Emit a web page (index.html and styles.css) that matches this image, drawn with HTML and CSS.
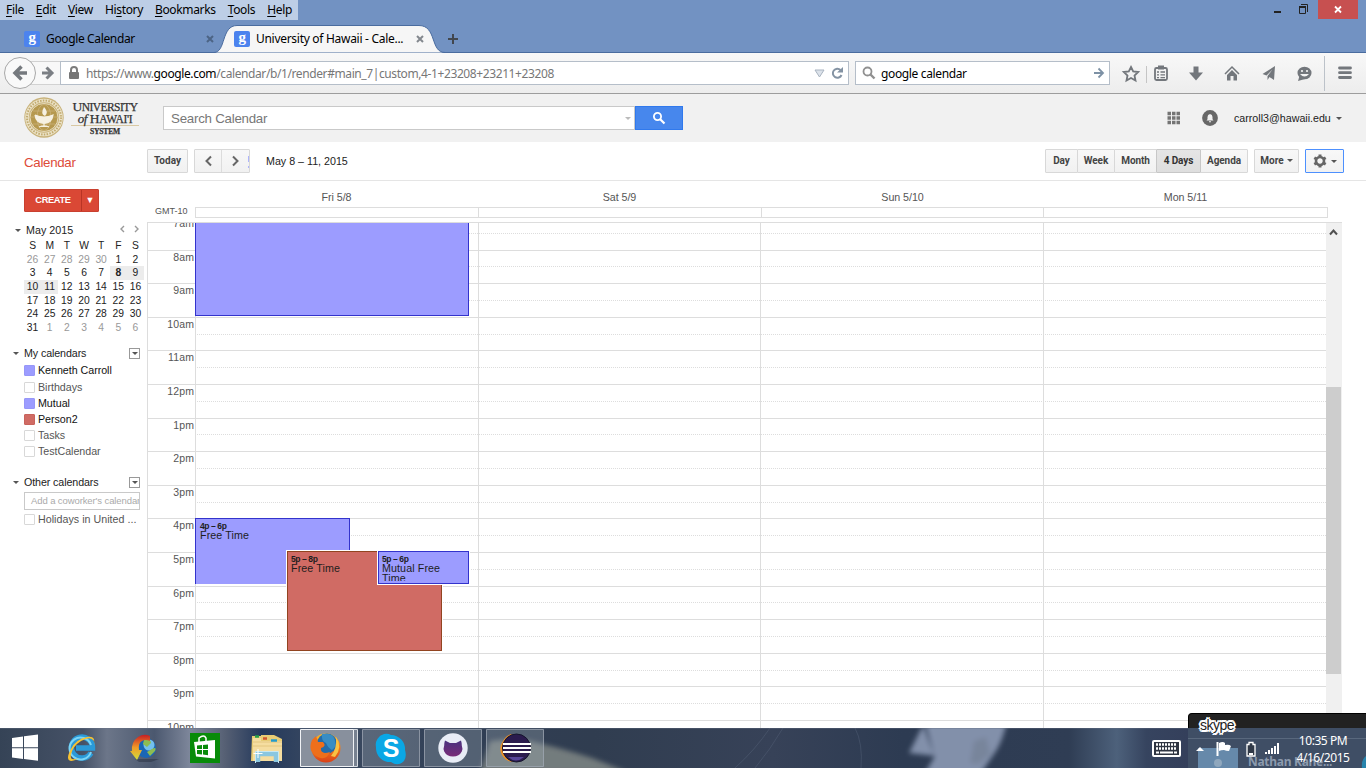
FILE: index.html
```html
<!DOCTYPE html>
<html lang="en">
<head>
<meta charset="utf-8">
<title>University of Hawaii - Calendar</title>
<link rel="stylesheet" href="styles.css">
</head>
<body>
<div class="screen">
  <header class="chrome">
    <div class="menurow">
      <nav class="menus"><span><u>F</u>ile</span><span><u>E</u>dit</span><span><u>V</u>iew</span><span>Hi<u>s</u>tory</span><span><u>B</u>ookmarks</span><span><u>T</u>ools</span><span><u>H</u>elp</span></nav>
      <div class="winbtns">
        <svg width="88" height="19" viewBox="0 0 88 19"><path d="M1 12h7" stroke="#222" stroke-width="2"/><path d="M26.500 7.500h6v6h-6zM28 4.500h6.500v7.500" fill="none" stroke="#222"/><path d="M26 7h7" stroke="#222" stroke-width="2"/><rect x="45" width="40" height="19" fill="#c75050"/><path d="M62 6.500l6 6m0-6l-6 6" stroke="#fff" stroke-width="1.800"/></svg>
      </div>
    </div>
    <div class="tabs">
      <svg class="tabshape" width="234" height="29" viewBox="0 0 234 29"><path d="M0 28.500C12 28.500 7 1.500 23 1.500H205C223 1.500 216 28.500 231 28.500" fill="#f6f6f6" stroke="#4a6c9f"/></svg>
      <div class="tab first"><b class="fav">g</b><span>Google Calendar</span></div>
      <svg class="x x1" width="8" height="8"><path d="M1 1l6 6m0-6l-6 6" stroke="#4c6485" stroke-width="2"/></svg>
      <div class="tab second"><b class="fav">g</b><span>University of Hawaii - Cale...</span></div>
      <svg class="x x2" width="8" height="8"><path d="M1 1l6 6m0-6l-6 6" stroke="#83888e" stroke-width="2"/></svg>
      <svg class="plus" width="12" height="12"><path d="M1 6h10M6 1v10" stroke="#42474e" stroke-width="2"/></svg>
    </div>
    <div class="toolbar">
      <svg class="navbtns" width="60" height="40" viewBox="0 0 60 40"><path d="M30 9.500h31v23H30" fill="#f8f8f8" stroke="#d2d2d2"/><circle cx="20" cy="21" r="15.500" fill="#f9f9f9" stroke="#a8a8a8"/><path d="M27 21H16m5.500-6.500L15 21l6.500 6.500" fill="none" stroke="#75797e" stroke-width="3.500"/><path d="M42 21h9m-4.500-5.500L52 21l-5.500 5.500" fill="none" stroke="#7b7f84" stroke-width="3"/></svg>
      <div class="url">
        <svg width="12" height="14" viewBox="0 0 12 14"><path d="M3 7V4a3 3 0 0 1 6 0v3" fill="none" stroke="#7c7c7c" stroke-width="2"/><rect x="1" y="6" width="10" height="7" rx="1" fill="#777"/></svg>
        <span class="address">https://www.<b>google.com</b>/calendar/b/1/render#main_7|custom,4-1+23208+23211+23208</span>
        <svg class="end" width="32" height="16" viewBox="0 0 32 16"><path d="M1 5h9l-4.500 7z" fill="#dce2ea" stroke="#a8b3c0"/><path d="M26.500 5a4.500 4.500 0 1 0 1 5" fill="none" stroke="#8493a3" stroke-width="2"/><path d="M23 7.500h6V2z" fill="#8493a3"/></svg>
      </div>
      <div class="searchbox">
        <svg width="14" height="14" viewBox="0 0 14 14"><circle cx="5.500" cy="5.500" r="4" fill="none" stroke="#909090" stroke-width="1.800"/><path d="M8.500 8.500l4 4" stroke="#909090" stroke-width="2.400"/></svg>
        <span>google calendar</span>
        <svg class="end" width="12" height="12" viewBox="0 0 12 12"><path d="M1 6h8M5.500 1.500L10 6l-4.500 4.500" fill="none" stroke="#7d91a5" stroke-width="1.800"/></svg>
      </div>
      <svg class="tools" width="246" height="40" viewBox="0 0 246 40">
        <path d="M11 14l2.200 4.500 5 .5-3.700 3.500 1 5-4.500-2.500-4.500 2.500 1-5L3.800 19l5-.5z" fill="none" stroke="#73777c" stroke-width="1.800"/>
        <path d="M26.500 13v17" stroke="#c5c5c5"/>
        <rect x="35" y="15" width="12" height="12" rx="1.500" fill="none" stroke="#73777c" stroke-width="1.800"/><path d="M38 14.500h6" stroke="#73777c" stroke-width="4"/><path d="M37 19h2m1.500 0H45m-8 2.800h2m1.500 0H45m-8 2.800h2m1.500 0H45" stroke="#73777c" stroke-width="1.300"/>
        <path d="M73.500 13.500h5v6H83l-7 8-7-8h4.500z" fill="#73777c"/>
        <path d="M105 21l7-7 7 7" fill="none" stroke="#73777c" stroke-width="1.500"/><path d="M107 22l5-5 5 5v5.500h-3.500v-4.500h-3v4.500H107z" fill="#73777c"/>
        <path d="M155 13l-1 14-4.500-3-2 3v-4l5-6.500-6 6-4-1.500z" fill="#73777c"/>
        <ellipse cx="184.500" cy="20" rx="7" ry="6.300" fill="#73777c"/><path d="M179.500 23l-1.500 5 7-2z" fill="#73777c"/><circle cx="182" cy="18" r="1.100" fill="#f3f3f3"/><circle cx="187" cy="18" r="1.100" fill="#f3f3f3"/><path d="M180 21h9q-4.500 5-9 0" fill="#f3f3f3"/>
        <path d="M204.500 3v35" stroke="#bcc2c9"/><path d="M219.500 15h11m-11 4.700h11m-11 4.800h11" stroke="#73777c" stroke-width="2.800" stroke-linecap="round"/>
      </svg>
    </div>
  </header>

  <section class="ghead">
    <svg class="seal" width="40" height="42" viewBox="0 0 40 42"><ellipse cx="20" cy="20.500" rx="19.700" ry="20.300" fill="#c8b27a"/><circle cx="20" cy="20.500" r="17" fill="none" stroke="#ece3c8" stroke-width="3.600"/><circle cx="20" cy="20.500" r="17" fill="none" stroke="#c2ab70" stroke-width="2" stroke-dasharray="1.500 1.300"/><circle cx="20" cy="20.500" r="14" fill="#b6994f" stroke="#efe7cf" stroke-width=".8"/><ellipse cx="20" cy="20.500" rx="7" ry="13" fill="none" stroke="#cdb67f" stroke-width=".7"/><path d="M7 20h26M9 14h22M9 27h22" stroke="#cdb67f" stroke-width=".7"/><path d="M11 18q9 4 18 0-1 8-9 8.500-8-.5-9-8.500M15 30q5-2.500 10 0M20 26v3" fill="#f6f1e3" stroke="#f6f1e3" stroke-width="1.200"/><path d="M20 10q5 5 1 9-5-2-1-9" fill="#f6f1e3"/></svg>
    <div class="brand"><div class="l1"><i>U</i>NIVERSITY</div><div class="l2"><em>of</em> <i>H</i>AWAI'I</div><div class="sys">SYSTEM</div></div>
    <div class="gsearch"><span>Search Calendar</span><s class="caret light"></s></div>
    <div class="gbtn"><svg width="14" height="14" viewBox="0 0 14 14"><circle cx="5.500" cy="5.500" r="3.600" fill="none" stroke="#fff" stroke-width="1.800"/><path d="M8 8l4.500 4.500" stroke="#fff" stroke-width="2.200"/></svg></div>
    <svg class="apps" width="14" height="14"><path d="M.5 2.500H4m1 0h3.500m1 0H13M.5 7H4m1 0h3.500m1 0H13M.5 11.500H4m1 0h3.500m1 0H13" stroke="#747474" stroke-width="3.300"/></svg>
    <svg class="bell" width="16" height="16"><circle cx="8" cy="8" r="7.900" fill="#676767"/><path d="M4.500 10.500l1-1.200V7q0-2.500 2.500-3 2.500.5 2.500 3v2.300l1 1.200zM7 11.200h2v1H7z" fill="#f1f1f1"/></svg>
    <span class="acct">carroll3@hawaii.edu</span><s class="caret"></s>
  </section>

  <section class="sub">
    <span class="title">Calendar</span>
    <span class="btn today">Today</span>
    <span class="btn arrows"><svg width="55" height="22"><path d="M16 6.500L11.500 11l4.500 4.500M38 6.500l4.500 4.500L38 15.500" fill="none" stroke="#666" stroke-width="2"/><path d="M26.500-1v24" stroke="#dcdcdc"/><path d="M53.500 6v6m0 4v2" stroke="#aeb4fb"/></svg></span>
    <span class="range">May 8 – 11, 2015</span>
    <div class="views"><span>Day</span><span>Week</span><span>Month</span><span class="on">4 Days</span><span>Agenda</span></div>
    <span class="btn more">More<s class="caret"></s></span>
    <span class="btn gear"><svg width="14" height="14" viewBox="-7 -7 14 14"><circle r="4" fill="none" stroke="#666" stroke-width="2.600"/><g stroke="#666" stroke-width="3"><path d="M0-4.500v-2M0 4.500v2M3.900-2.300l1.800-1M-3.900 2.300l-1.800 1M-3.900-2.300l-1.800-1M3.900 2.300l1.800 1"/></g></svg><s class="caret"></s></span>
  </section>

  <main class="main">
    <aside class="side">
      <div class="create"><b>CREATE</b><span>▼</span></div>
      <div class="month"><s class="caret"></s><span>May 2015</span><svg width="20" height="8"><path d="M4 1L1 4l3 3M15 1l3 3-3 3" fill="none" stroke="#999" stroke-width="1.400"/></svg></div>
      <div class="mini" id="mini"></div>
      <div class="listhead"><s class="caret"></s><span>My calendars</span><em><s class="caret"></s></em></div>
      <div class="cal on k"><i class="blue"></i>Kenneth Carroll</div>
      <div class="cal"><i></i>Birthdays</div>
      <div class="cal on"><i class="blue"></i>Mutual</div>
      <div class="cal on"><i class="red"></i>Person2</div>
      <div class="cal"><i></i>Tasks</div>
      <div class="cal"><i></i>TestCalendar</div>
      <div class="listhead other"><s class="caret"></s><span>Other calendars</span><em><s class="caret"></s></em></div>
      <div class="add">Add a coworker's calendar</div>
      <div class="cal wide"><i></i>Holidays in United ...</div>
    </aside>
    <div class="sched">
      <div class="days"><span>Fri 5/8</span><span>Sat 5/9</span><span>Sun 5/10</span><span>Mon 5/11</span></div>
      <div class="allday"><label>GMT-10</label><div><p></p><p></p><p></p><p></p></div></div>
      <div class="body">
        <div class="grid">
          <div class="rows" id="rows"></div>
          <div class="cols"><p></p><p></p><p></p><p></p></div>
          <div class="ev e1"></div>
          <div class="ev e2"><b>4p – 6p</b>Free Time</div>
          <div class="ev e3"><b>5p – 8p</b>Free Time</div>
          <div class="ev e4"><b>5p – 6p</b>Mutual Free Time</div>
        </div>
        <div class="scroll"><svg width="16" height="18"><path d="M4 11.500l3.500-4 3.500 4" fill="none" stroke="#505050" stroke-width="2"/></svg><div></div></div>
      </div>
    </div>
  </main>

  <div class="skypop"><span>skype</span></div>
  <footer class="task">
    <svg class="wall" width="1366" height="40" viewBox="0 0 1366 40">
      <defs><filter id="slight"><feGaussianBlur stdDeviation="2.600"/></filter>
      <linearGradient id="base"><stop offset="0" stop-color="#354356"/><stop offset=".07" stop-color="#465267"/><stop offset=".09" stop-color="#6c7689"/><stop offset=".13" stop-color="#4b586f"/><stop offset=".16" stop-color="#7e879b"/><stop offset=".19" stop-color="#555f73"/><stop offset=".22" stop-color="#24395c"/><stop offset=".27" stop-color="#3b4a61"/><stop offset=".4" stop-color="#303e54"/><stop offset=".5" stop-color="#303d50"/><stop offset=".65" stop-color="#374258"/><stop offset=".76" stop-color="#2d3b52"/><stop offset=".9" stop-color="#2f3d54"/><stop offset=".94" stop-color="#4d617b"/><stop offset=".965" stop-color="#36445f"/><stop offset="1" stop-color="#343f5b"/></linearGradient></defs>
      <rect width="1188" height="40" fill="url(#base)"/><rect x="1188" width="178" height="40" fill="#3f4e65"/>
      <g filter="url(#slight)"><path d="M480 44l10-31 27-3q45 10 75 20l35 14z" fill="#737b7d"/><path d="M934 27L925-6h82q-5 20-11 29l-15 22h-56l10-17-26-3 14-28z" fill="#8290aa"/><path d="M970 35l4-22 12-4 4 17-12 10z" fill="#78859b"/></g>
      <path d="M735 40q20-18 35-40m-15 40q15-18 28-40M855 0q8 15 6 40" fill="none" stroke="#66748a" opacity=".3"/>
      <path d="M0 .5h1188" stroke="#687286" opacity=".35"/><path d="M1188 10.500h178" stroke="#59687d"/>
    </svg>
    <svg class="icons" width="560" height="40" viewBox="0 0 560 40">
      <defs><linearGradient id="fox" x2="0" y2="1"><stop stop-color="#ffbc20"/><stop offset=".5" stop-color="#f07a1c"/><stop offset="1" stop-color="#d94018"/></linearGradient><linearGradient id="arc" x2="0" y2="1"><stop stop-color="#c61d24"/><stop offset=".5" stop-color="#f09a28"/><stop offset="1" stop-color="#cfe03c"/></linearGradient><linearGradient id="hub" x2="0" y2="1"><stop stop-color="#4a327e"/><stop offset="1" stop-color="#792c78"/></linearGradient></defs>
      <path d="M12 10l11-1.500v10.700H12zM24 8.300L38 6.500v12.700H24zM12 20.200h11V31l-11-1.600zM24 20.200h14v12.600L24 31z" fill="#fff"/>
      <path d="M91 25a10.500 10.500 0 1 1 1.500-5H76" fill="none" stroke="#2b9ad8" stroke-width="5.500"/><path d="M91 24a11 11 0 1 1 0-7" fill="none" stroke="#7bd5f6" stroke-width="2"/><path d="M94 17q2-10-7-8-11 2-16 12-6 11 0 12 3 0 8-3-10 4-8-4 2-8 10-13 9-5 12-1 2 1 1 5z" fill="#f8c332"/>
      <path d="M135 31h24l-8 3h-12z" fill="#27303f" opacity=".5"/><circle cx="146" cy="20" r="10" fill="#1a66b5"/><circle cx="149" cy="17" r="5.500" fill="#73c0ed"/><path d="M144 12q7-1 7 3l-4 4-4-3zm8 9q5-3 3 2l-5 5-3-4z" fill="#8dbc52"/><path d="M150 8q-6-3-12 1-7 5-6 14h-2l7 9 5-10h-3q-1-7 3-9 3-2 8 0z" fill="url(#arc)"/>
      <path d="M190 5h30v30h-30z" fill="#088b09"/><path d="M194 14l21-2v18.500l-19-2z" fill="#fff"/><path d="M199 14V10q5-4 7 0v3" fill="none" stroke="#fff" stroke-width="1.500"/><path d="M197 17.500l5-.5v4h-5zm6-.6l5-.5V21h-5zm-6 5.100h5v4.500l-5-.5zm6 0h5v5.200l-5-.6z" fill="#088b09"/>
      <path d="M252 8h9v-1h13l8 4v22h-31z" fill="#e8cc74"/><path d="M253 10h8v3h21v20h-29z" fill="#f5dda0"/><path d="M253 18h29M253 14h29" stroke="#e3c67e"/><path d="M255 8.500h4" stroke="#28a348" stroke-width="2.500"/><path d="M263 10.500h4" stroke="#d05731" stroke-width="2.500"/><path d="M271 12.500h6" stroke="#259bcb" stroke-width="2.500"/><path d="M258 34V26h18v8" fill="none" stroke="#8bc7e0" stroke-width="4.500"/><path d="M255.500 35V23.500h23V35" fill="none" stroke="#c7e8f2"/><path d="M258 21v9m-4.500-4.500h9" stroke="#fff"/>
      <path d="M353.500 1.500h4v37h-4z" fill="#778190" stroke="#d7dce2"/><path d="M300.500 1.500h53v37h-53z" fill="#88909d" stroke="#f0f2f5"/>
      <path d="M362.500 1.500h57v37h-57zM424.500 1.500h57v37h-57zM486.500 1.500h57v37h-57z" fill="#9eaab5" fill-opacity=".32" stroke="#a1a9b5" stroke-opacity=".75"/>
      <circle cx="326" cy="20" r="14.500" fill="url(#fox)"/><circle cx="327" cy="15.500" r="10" fill="#236caa"/><path d="M322 6q12-2 13 7 2 6-3 9-4-2-6-7-5-2-4-9" fill="#388dc4"/><path d="M312 12l4-4 2 6 5 0q4 4-2 6-1 7 9 4-4 9-12 5-11-5-6-17" fill="#ee6f1b"/><path d="M336 9q7 10-1 20l-4-1q6-7 5-19" fill="#f8c244"/>
      <path d="M384 6a11 11 0 0 0-8 13 14 14 0 0 0 15 15q7 5 13-1 3-5 1-11A14 14 0 0 0 391 7q-3-2-7-1" fill="#0aa7e5"/><text x="391" y="29" class="skypes">S</text>
      <circle cx="453" cy="20" r="14.700" fill="#e9edf6"/><path d="M445 12.500l5 2.500h6l5-2.500q1 3 .8 5 1.200 3 0 6-2.500 5-8.800 5t-8.800-5q-1.200-3 0-6-.2-2 .8-5z" fill="url(#hub)"/>
      <path d="M513 6q-10 5-9 15 1 10 10 13-8 0-12-7t1-14q4-7 10-7" fill="#ee9027"/><circle cx="516.500" cy="20" r="14" fill="#2b1b4e" stroke="#15152c"/><path d="M508 29q8 7 16 0" fill="#57449a"/><path d="M503 16h28m-28 4h28m-28 4h28" stroke="#fff" stroke-width="1.800"/>
    </svg>
    <svg class="tray" width="214" height="40" viewBox="0 0 214 40">
      <path d="M46 20h40v20H46z" fill="#6689aa"/><circle cx="66" cy="35" r="4" fill="#8fa7bd"/>
      <rect x="1" y="13" width="27" height="15" rx="1" fill="#2f3542" stroke="#fff" stroke-width="2"/><path d="M4 16.500h21M4 20.500h21" stroke="#fff" stroke-width="2.300" stroke-dasharray="2 1"/><path d="M4 24.500h3m1 0h13m1 0h3" stroke="#fff" stroke-width="2"/>
      <path d="M44 23l4-4 4 4z" fill="#fff"/><path d="M65.500 14v14" stroke="#fff" stroke-width="2"/><path d="M67 15q4-2 6 0v2q4-1 6 1l-2 5q-3 0-5-1-3 0-5 1z" fill="#fff"/>
      <path d="M97 14.500h4v2h2V28h-8V16.500h2z" fill="#303947" stroke="#fff" stroke-width="1.300"/><path d="M97 26h4" stroke="#fff" stroke-width="2"/><path d="M114 26v-2m3 2v-4m3 4v-6m3 6v-8m3 8v-11" stroke="#fff" stroke-width="2"/>
      <path d="M214 28q-5 4-4 12h4z" fill="#2784ad"/>
    </svg>
    <span class="nathan">Nathan Kane...</span><div class="clock">10:35 PM<br>4/16/2015</div>
  </footer>
</div>
<script src="app.js"></script>
</body>
</html>
```
FILE: styles.css
```css
*{box-sizing:border-box}
body{margin:0;overflow:hidden}
p{margin:0}
svg{display:block;flex:none}
.screen{position:relative;width:1366px;height:768px;overflow:hidden;background:#fff;font:10.700px/13px "Liberation Sans",Arial,sans-serif;color:#222;display:flex;flex-direction:column;white-space:nowrap}
.caret{display:inline-block;flex:none;width:0;height:0;border:3px solid transparent;border-top:3.500px solid #555;border-bottom:0;text-decoration:none}
.caret.light{border-top-color:#bbb}
.chrome{height:94px;background:#7292c2;font:12px/20px "Noto Sans","Open Sans",sans-serif;color:#000}
.menurow{height:20px;display:flex;justify-content:space-between}
.menus{width:298px;background:#bdcee6;display:flex;gap:12px;padding-left:6px;letter-spacing:-.34px}
.winbtns{width:93px}
.menus u{text-underline-offset:2px}
.tabs{height:33px;position:relative;border-bottom:1px solid #4a6c9f}
.tabshape{position:absolute;left:214px;top:4px;z-index:1}
.tab{position:absolute;top:9px;display:flex;gap:6px;align-items:center;height:20px;z-index:2;letter-spacing:-.36px}
.second{letter-spacing:-.29px}
.first{left:24px}.second{left:234px}
.fav{width:16px;height:16px;border-radius:2px;background:#4c83ee;color:#fff;font:bold 15px/12px "Liberation Serif",serif;text-align:center}
.x{position:absolute;top:15px;z-index:2}.x1{left:206px}.x2{left:416px}
.plus{position:absolute;left:447px;top:13px}
.toolbar{height:41px;background:linear-gradient(#f8f8f8,#ededed);border-bottom:1px solid #9d9d9d;display:flex;position:relative}
.navbtns{margin-top:-1px}
.url,.searchbox{height:24px;margin-top:8px;background:#fff;border:1px solid #b5bec9;display:flex;align-items:center}
.url{width:789px;padding:0 2px 0 7px;gap:6px;color:#777}
.address{letter-spacing:-.4px;padding-top:2px}
.url b{font-weight:400;color:#000}
.end{margin-left:auto}
.searchbox{width:255px;margin-left:6px;padding:0 4px 0 6px;gap:5px;letter-spacing:-.36px}
.searchbox span{padding-top:2px}
.tools{margin-left:10px}
.ghead{height:48px;background:#f1f1f1;display:flex;align-items:center;position:relative}
.seal{margin-left:24px;width:40px}
.brand{margin-left:7px;width:68px;font:11.500px/12px "Liberation Serif",serif;color:#333;text-align:center;letter-spacing:-.55px;-webkit-text-stroke:.25px #333;padding-top:2px}
.brand i{font-style:normal;font-size:13.500px;line-height:11px}
.brand em{font-size:13px;line-height:11px}
.brand .l1{height:12px;line-height:11px}
.brand .l2{border-bottom:1px solid #d9c9a4;height:13px;line-height:11px;letter-spacing:-.3px}
.brand .sys{font-size:7.600px;line-height:12px;letter-spacing:-.2px;font-weight:bold}
.gsearch{margin-left:24px;width:472px;height:24px;border:1px solid #c9c9c9;background:#fff;padding:0 3px 0 7px;font-size:13.300px;letter-spacing:-.24px;color:#777;display:flex;align-items:center;justify-content:space-between}
.gbtn{width:48px;height:24px;background:#4787ed;border:1px solid #3079ed;display:flex;align-items:center;justify-content:center}
.apps{margin-left:484px}
.bell{margin-left:21px}
.acct{margin:0 5px 0 16px;width:97px;letter-spacing:-.01px}
.sub{height:39px;border-bottom:1px solid #e5e5e5;display:flex;align-items:center;color:#222}
.title{color:#dd4b39;font-size:13.300px;letter-spacing:-.3px;width:123px;padding:3px 0 0 24px;box-sizing:content-box}
.btn,.views span{height:24px;border:1px solid #d8d8d8;background:linear-gradient(#f8f8f8,#f1f1f1);font:bold 10px/22px Roboto,sans-serif;color:#444;border-radius:1px;text-align:center}
.today{width:41px}
.arrows{width:56px;margin-left:6px}
.range{margin-left:16px;width:83px}
.views{display:flex;margin-left:696px}
.views span{margin-right:-1px;letter-spacing:-.08px}
.views span:nth-child(1){width:33px}.views span:nth-child(2){width:38px}.views span:nth-child(3){width:43px}.views span:nth-child(4){width:45px}.views span:nth-child(5){width:48px}
.views .on{background:linear-gradient(#e5e5e5,#dedede);border-color:#c7c7c7;color:#333;position:relative}
.more{width:45px;margin-left:7px}
.more .caret{margin:0 0 2px 3px}
.gear{width:39px;margin-left:6px;border-color:#4d90fe;display:flex;align-items:center;justify-content:center;gap:4px}
.main{height:547px;display:flex}
.side{width:147px;padding-top:8px}
.create{margin-left:24px;width:75px;height:23px;background:#da4835;border:1px solid #c9402f;color:#fff;display:flex;line-height:21px;font-size:9.300px;border-radius:1px}
.create b{width:57px;text-align:center;border-right:1px solid #b93425;letter-spacing:-.35px;font-weight:bold}
.create span{flex:1;text-align:center;font-size:9px}
.month{display:flex;align-items:center;height:14px;margin:11px 0 0 15px;gap:5px;letter-spacing:.05px}
.month svg{margin:-3px 7px 0 auto}
.mini{margin:2px 0 0 24px;width:120px;display:grid;grid-template-columns:repeat(7,17.143px);grid-template-rows:repeat(7,13.650px);text-align:center;line-height:14px;font-size:10.300px;color:#222}
.mini .dim{color:#999}
.mini .hi{background:#ececec}
.mini .b{font-weight:bold}
.listhead{display:flex;align-items:center;height:14px;margin:12px 0 0 13px;gap:5px;letter-spacing:-.1px}
.listhead em{margin:0 7px 0 auto;width:11px;height:11px;border:1px solid #999;display:flex;align-items:center;justify-content:center}
.cal{height:16px;margin-left:24px;display:flex;align-items:center;gap:3px;color:#555;letter-spacing:-.03px}
.cal.wide{letter-spacing:.02px}
.cal.on{color:#111}
.cal.k{margin-top:2px;height:17px}
.cal i{width:11px;height:11px;border:1px solid #d8d8d8;border-radius:1px}
.cal .blue{background:#9c9cff;border-color:#9797f8}
.cal .red{background:#d06b64;border-color:#c8635c}
.listhead.other{margin-top:16px}
.add{margin:3px 0 1px 24px;width:116px;height:18px;border:1px solid #c9c9c9;color:#aaa;font-size:9.500px;line-height:16px;letter-spacing:-.1px;padding-left:6px;overflow:hidden}
.sched{width:1195px;color:#555}
.days{height:26px;padding:10px 0 0 48px;display:grid;grid-template-columns:repeat(4,283px)}
.days span{text-align:center;letter-spacing:-.05px}
.allday{height:15px;display:flex}
.allday label{width:48px;padding-left:8px;font-size:9px;line-height:8px}
.allday div{width:1133px;height:11px;border:1px solid #ddd;display:flex}
.allday p{width:283px;border-right:1px solid #ddd}
.allday p:last-child{border:0}
.body{height:506px;border-top:1px solid #ddd;display:flex;overflow:hidden}
.grid{width:1179px;margin-top:-7px;position:relative;height:520px}
.row{height:33.600px;border-top:1px solid #ddd;display:grid;grid-template-columns:48px 1fr}
.row span{text-align:right;padding:0 1px 0 0;line-height:12px;font-size:10.500px;letter-spacing:.1px}
.row i{border-bottom:1px dotted #ddd;height:16.800px}
.cols{position:absolute;inset:0;border-left:1px solid #ddd;padding-left:47px;display:flex}
.cols p{width:282.600px;border-left:1px solid #ddd}
.ev{position:absolute;border:1px solid #3333cc;background:#9c9cff;color:#1d1d1d;padding:3px 0 0 4px;line-height:9.500px;white-space:normal;overflow:hidden;letter-spacing:.1px}
.ev b{display:block;font:bold 8.500px/9px "Liberation Sans",sans-serif;letter-spacing:-.4px}
.e1{left:48px;top:0;width:274px;height:100px}
.e2{left:48px;top:302px;width:155px;height:66px;border-bottom:0}
.e3{left:140px;top:335px;width:155px;height:100px;background:#d06b64;border-color:#924420;box-shadow:0 0 0 1px #fff;padding-left:3px}
.e4{left:231px;top:335px;width:91px;height:33px;box-shadow:0 0 0 1px #fff;padding:3px 20px 0 3px}
.e4::after{content:"";position:absolute;left:0;right:0;bottom:0;height:2px;background:#9c9cff}
.scroll{width:16px;background:#f0f0f0}
.scroll div{margin-top:146px;height:287px;background:#cdcdcd;width:15px}
.skypop{position:absolute;z-index:2;left:1188px;top:713px;width:182px;height:15px;background:#222;border:1px solid #000;border-bottom:0;border-radius:4px 0 0 0}
.skypop span{position:absolute;left:11px;top:3px;font:14px/16px "Liberation Sans",sans-serif;letter-spacing:-.500px;color:#222;text-shadow:1px 0 #fff,-1px 0 #fff,0 1px #fff,0 -1px #fff,1px 1px #fff,-1px -1px #fff,2px 0 #fff,-2px 0 #fff,1px 2px #fff,-1px 2px #fff,1px -2px #fff,-1px -2px #fff}
.task{height:40px;position:relative;color:#fff}
.wall,.icons{position:absolute;left:0;top:0}
.tray{position:absolute;left:1152px;top:0}
.skypes{font:bold 25px "Liberation Sans",sans-serif;fill:#fff;text-anchor:middle}
.clock{position:absolute;left:1283px;top:4px;width:80px;text-align:center;font:12px/17px "Noto Sans",sans-serif;letter-spacing:-.45px}
.nathan{position:absolute;left:1248px;top:27px;font:bold 12px/14px "Noto Sans",sans-serif;color:#8c9aad;letter-spacing:-.3px}
```
FILE: app.js
```js
const mini = document.getElementById('mini');
const cells = [...'SMTWTFS'].map(t => [t, '']);
for (let d = 26; d <= 30; d++) cells.push([d, 'dim']);
for (let d = 1; d <= 31; d++) cells.push([d, (d > 7 && d < 12 ? 'hi' : '') + (d === 8 ? ' b' : '')]);
for (let d = 1; d <= 6; d++) cells.push([d, 'dim']);
mini.innerHTML = cells.map(([t, c]) => `<span class="${c}">${t}</span>`).join('');

const hours = ['7am', '8am', '9am', '10am', '11am', '12pm', '1pm', '2pm', '3pm', '4pm', '5pm', '6pm', '7pm', '8pm', '9pm', '10pm'];
document.getElementById('rows').innerHTML = hours.map(h => `<div class="row"><span>${h}</span><i></i></div>`).join('');
```
